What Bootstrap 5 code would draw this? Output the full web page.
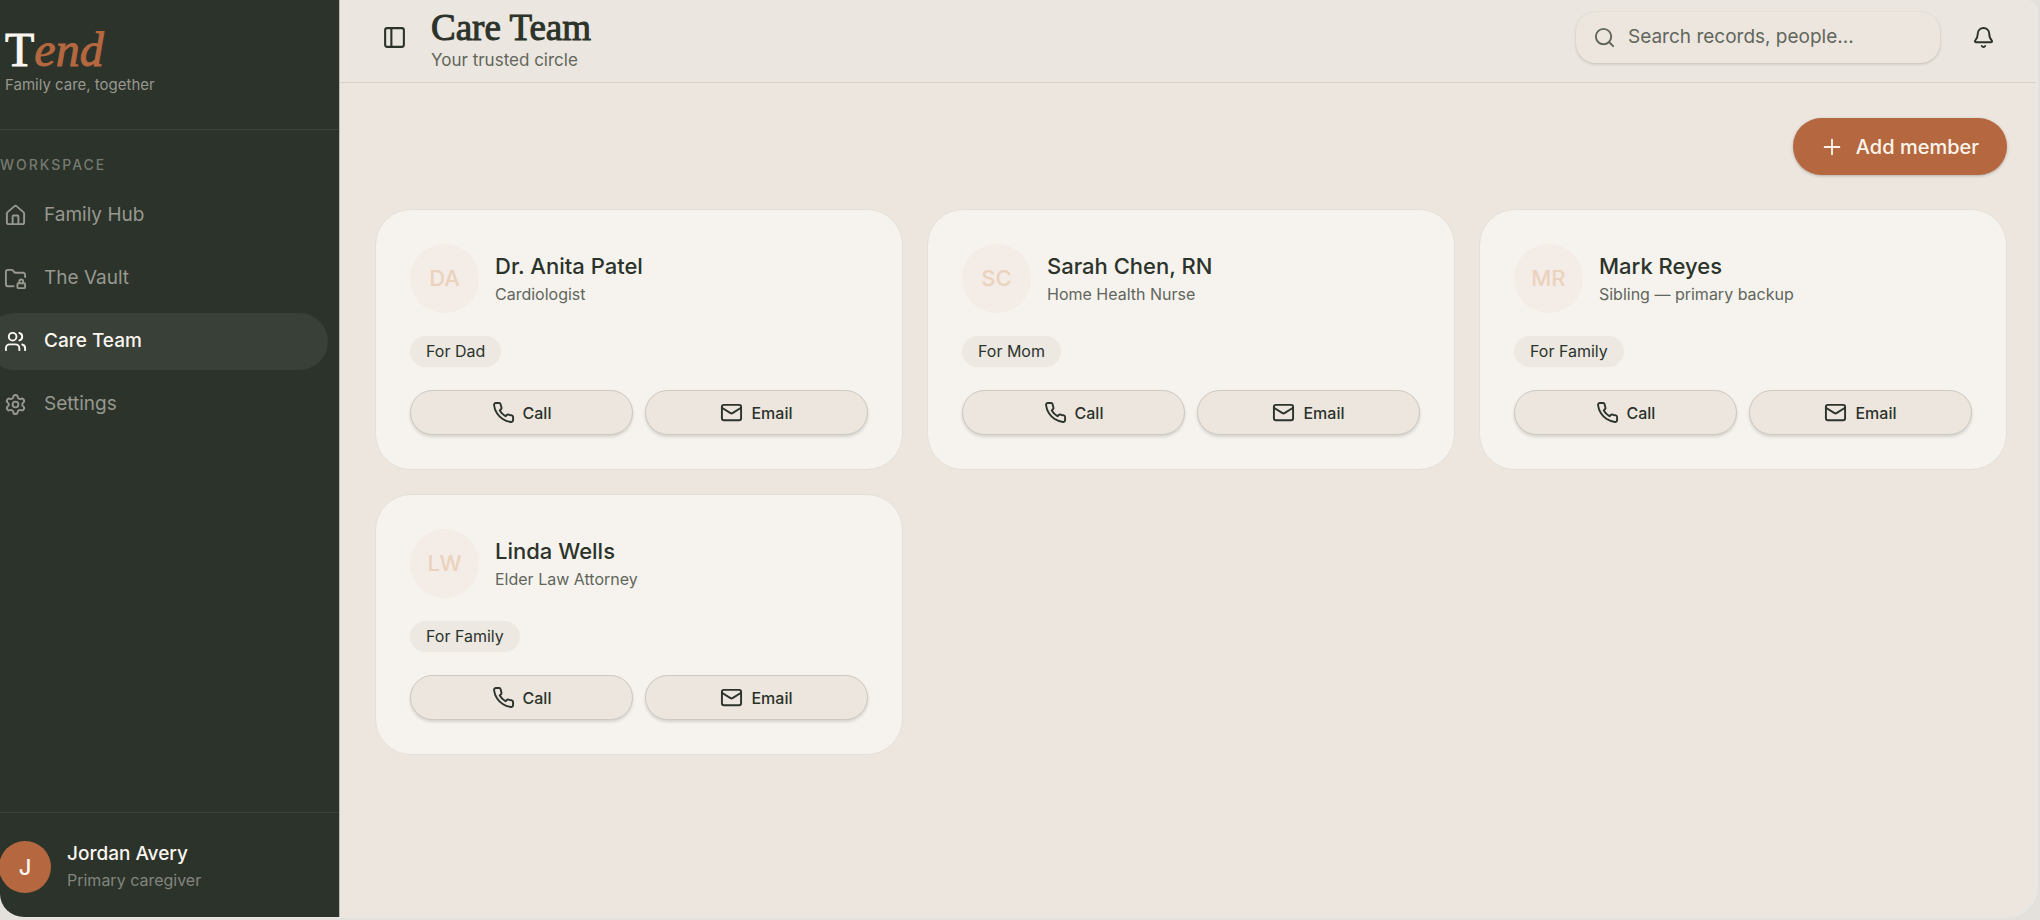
<!DOCTYPE html>
<html lang="en">
<head>
<meta charset="utf-8">
<meta name="viewport" content="width=device-width, initial-scale=1">
<title>Tend – Care Team</title>
<link href="https://cdn.jsdelivr.net/npm/bootstrap@5.3.0/dist/css/bootstrap.min.css" rel="stylesheet">
<style>
  :root { --ink: #2b332b; --muted: #61665c; --clay: #b5683f; --sand: #ede6df; --line: #d5d0ca; }
  body { font-family: Inter, "Open Sans", sans-serif; color: var(--ink); background: #e4e1dc; }
  svg { fill: none; stroke: currentColor; stroke-width: 2; stroke-linecap: round; stroke-linejoin: round; flex: none; }
  .shell { min-height: calc(100vh - 2px); margin-right: 2px; border-right: 2px solid #e9e8e8; border-bottom: 1px solid #e9e8e8;
    border-radius: 0 12px 32px 24px; overflow: hidden; background: var(--sand); }
  .side { width: 340px; flex: none; background: #2b332b; color: #97988f; border-right: 1px solid #b9b8b1; }
  .brand-block { height: 130px; padding: 23px 5px 0; border-bottom: 1px solid #3c433b; }
  .logo { font: 48px/54px "Liberation Serif", serif; color: #fbf6ef; -webkit-text-stroke: 1px; }
  .logo em { color: var(--clay); }
  .tagline { font-size: 15px; line-height: 16px; }
  .section-label { font-size: 14px; line-height: 20px; font-weight: 500; letter-spacing: 2px; color: #767a71; padding: 25px 0 12px; }
  .side .nav { gap: 6px; margin: 0 11px 0 -14px; }
  .side .nav-link { height: 57px; padding: 0 18px; border-radius: 29px; font-size: 19px; gap: 17px; color: #97988f; }
  .side .nav-link.active { background: #384037; color: #fbf6ef; font-weight: 500; }
  .profile { height: 105px; padding-top: 4px; border-top: 1px solid #3c433b; gap: 16px; margin-left: -1px; }
  .profile-pic { width: 52px; height: 52px; background: var(--clay); color: #fbf6ef; font-size: 22px; font-weight: 500; }
  .profile-name { font-size: 19px; line-height: 26px; font-weight: 500; color: #fbf6ef; }
  .profile-role { font-size: 16px; line-height: 26px; color: #83857d; }
  .topbar { height: 83px; padding: 0 41px 8px 42px; background: #ebe6df; border-bottom: 1px solid var(--line); }
  .title-block { padding-top: 6px; }
  .page-title { font: 37px/40px "Liberation Serif", serif; -webkit-text-stroke: 1px; }
  .page-sub { font-size: 17px; line-height: 24px; color: var(--muted); }
  .icon-btn { border: 0; padding: 0; background: none; color: var(--ink); display: flex; }
  .search-box { width: 364px; height: 51px; border-radius: 20px; padding: 0 17px; gap: 12px; background: var(--sand); color: var(--muted);
    box-shadow: 0 1px 3px rgba(43,51,43,.22); margin-right: 32px; }
  .search-box input { border: 0; background: none; outline: 0; padding: 0; min-width: 0; font-size: 19px; color: var(--ink); }
  .search-box input::placeholder { color: var(--muted); opacity: 1; }
  .content { padding: 35px 29px 35px 35px; }
  .add-btn { height: 57px; padding: 0 28px; border: 0; border-radius: 29px; background: var(--clay); color: #fdf5ec; font-size: 20px;
    font-weight: 500; gap: 13px; box-shadow: 0 1px 3px rgba(43,51,43,.3); margin-bottom: 34px; }
  .team { --bs-gutter-x: 24px; --bs-gutter-y: 24px; }
  .person { background: #f6f3ee; border: 1px solid #e4e0d9; border-radius: 36px; padding: 34px; color: var(--ink); }
  .initials { width: 69px; height: 69px; background: #f4ece6; color: #ebd2bd; font-size: 22px; font-weight: 500; }
  .person-name { font-size: 22px; line-height: 30px; font-weight: 500; margin: 0; }
  .person-role { font-size: 16px; line-height: 26px; color: var(--muted); }
  .chip { font-size: 16px; line-height: 31px; padding: 0 16px; background: #ede8e2; margin: 23px 0; }
  .contact { height: 45px; border: 1px solid #cec8c1; border-radius: 23px; background: var(--sand); color: var(--ink); font-size: 16px;
    font-weight: 500; padding: 0; gap: 8px; box-shadow: 0 2px 3px rgba(43,51,43,.16); }
</style>
</head>
<body>
<svg class="d-none" aria-hidden="true">
  <symbol id="phone" viewBox="0 0 24 24"><path d="M22 16.92v3a2 2 0 0 1-2.18 2 19.79 19.79 0 0 1-8.63-3.07 19.5 19.5 0 0 1-6-6 19.79 19.79 0 0 1-3.07-8.67A2 2 0 0 1 4.11 2h3a2 2 0 0 1 2 1.72 12.84 12.84 0 0 0 .7 2.81 2 2 0 0 1-.45 2.11L8.09 9.91a16 16 0 0 0 6 6l1.27-1.27a2 2 0 0 1 2.11-.45 12.84 12.84 0 0 0 2.81.7A2 2 0 0 1 22 16.92z"/></symbol>
  <symbol id="mail" viewBox="0 0 24 24"><rect x="2" y="4" width="20" height="16" rx="2"/><path d="m22 7-8.97 5.7a1.94 1.94 0 0 1-2.06 0L2 7"/></symbol>
</svg>
<div class="shell d-flex">
  <aside class="side d-flex flex-column">
    <div class="brand-block">
      <div class="logo">T<em>end</em></div>
      <div class="tagline">Family care, together</div>
    </div>
    <div class="section-label">WORKSPACE</div>
    <nav class="nav flex-column" aria-label="Workspace">
      <a class="nav-link d-flex align-items-center" href="#"><svg width="23" height="23" viewBox="0 0 24 24"><path d="M15 21v-8a1 1 0 0 0-1-1h-4a1 1 0 0 0-1 1v8"/><path d="M3 10a2 2 0 0 1 .709-1.528l7-5.999a2 2 0 0 1 2.582 0l7 5.999A2 2 0 0 1 21 10v9a2 2 0 0 1-2 2H5a2 2 0 0 1-2-2z"/></svg>Family Hub</a>
      <a class="nav-link d-flex align-items-center" href="#"><svg width="23" height="23" viewBox="0 0 24 24"><rect width="8" height="5" x="14" y="17" rx="1"/><path d="M10 20H4a2 2 0 0 1-2-2V5a2 2 0 0 1 2-2h3.9a2 2 0 0 1 1.69.9l.81 1.2a2 2 0 0 0 1.67.9H20a2 2 0 0 1 2 2v2.5"/><path d="M20 17v-2a2 2 0 1 0-4 0v2"/></svg>The Vault</a>
      <a class="nav-link active d-flex align-items-center" href="#" aria-current="page"><svg width="23" height="23" viewBox="0 0 24 24"><path d="M16 21v-2a4 4 0 0 0-4-4H6a4 4 0 0 0-4 4v2"/><circle cx="9" cy="7" r="4"/><path d="M22 21v-2a4 4 0 0 0-3-3.87"/><path d="M16 3.13a4 4 0 0 1 0 7.75"/></svg>Care Team</a>
      <a class="nav-link d-flex align-items-center" href="#"><svg width="23" height="23" viewBox="0 0 24 24"><path d="M9.671 4.136a2.34 2.34 0 0 1 4.659 0 2.34 2.34 0 0 0 3.319 1.915 2.34 2.34 0 0 1 2.33 4.033 2.34 2.34 0 0 0 0 3.831 2.34 2.34 0 0 1-2.33 4.033 2.34 2.34 0 0 0-3.319 1.915 2.34 2.34 0 0 1-4.659 0 2.34 2.34 0 0 0-3.32-1.915 2.34 2.34 0 0 1-2.33-4.033 2.34 2.34 0 0 0 0-3.831A2.34 2.34 0 0 1 6.35 6.051a2.34 2.34 0 0 0 3.319-1.915"/><circle cx="12" cy="12" r="3"/></svg>Settings</a>
    </nav>
    <div class="profile mt-auto d-flex align-items-center">
      <div class="profile-pic rounded-circle d-flex align-items-center justify-content-center">J</div>
      <div>
        <div class="profile-name">Jordan Avery</div>
        <div class="profile-role">Primary caregiver</div>
      </div>
    </div>
  </aside>

  <main class="flex-grow-1">
    <header class="topbar d-flex align-items-center">
      <button class="icon-btn" type="button" aria-label="Toggle sidebar"><svg width="25" height="25" viewBox="0 0 24 24"><rect x="3" y="3" width="18" height="18" rx="2"/><path d="M9 3v18"/></svg></button>
      <div class="title-block ms-4 me-auto">
        <h1 class="page-title m-0">Care Team</h1>
        <div class="page-sub">Your trusted circle</div>
      </div>
      <label class="search-box d-flex align-items-center">
        <svg width="23" height="23" viewBox="0 0 24 24"><circle cx="11" cy="11" r="8"/><path d="m21 21-4.3-4.3"/></svg>
        <input class="flex-grow-1" type="search" placeholder="Search records, people..." aria-label="Search records, people">
      </label>
      <button class="icon-btn" type="button" aria-label="Notifications"><svg width="23" height="23" viewBox="0 0 24 24"><path d="M10.268 21a2 2 0 0 0 3.464 0"/><path d="M3.262 15.326A1 1 0 0 0 4 17h16a1 1 0 0 0 .74-1.673C19.41 13.956 18 12.499 18 8A6 6 0 0 0 6 8c0 4.499-1.411 5.956-2.738 7.326"/></svg></button>
    </header>

    <section class="content">
      <div class="d-flex justify-content-end">
        <button class="add-btn d-flex align-items-center" type="button"><svg width="22" height="22" viewBox="0 0 24 24"><path d="M4 12h16M12 4v16"/></svg>Add member</button>
      </div>
      <div class="row row-cols-1 row-cols-lg-2 row-cols-xl-3 team">
        <div class="col"><article class="card person">
          <div class="d-flex align-items-center gap-3">
            <div class="initials rounded-circle d-flex align-items-center justify-content-center">DA</div>
            <div><h2 class="person-name">Dr. Anita Patel</h2><div class="person-role">Cardiologist</div></div>
          </div>
          <span class="chip rounded-pill align-self-start">For Dad</span>
          <div class="d-flex contacts">
            <button class="contact flex-fill w-50 me-2 d-flex align-items-center justify-content-center" type="button"><svg width="23" height="23"><use href="#phone"/></svg>Call</button>
            <button class="contact flex-fill w-50 ms-1 d-flex align-items-center justify-content-center" type="button"><svg width="23" height="23"><use href="#mail"/></svg>Email</button>
          </div>
        </article></div>
        <div class="col"><article class="card person">
          <div class="d-flex align-items-center gap-3">
            <div class="initials rounded-circle d-flex align-items-center justify-content-center">SC</div>
            <div><h2 class="person-name">Sarah Chen, RN</h2><div class="person-role">Home Health Nurse</div></div>
          </div>
          <span class="chip rounded-pill align-self-start">For Mom</span>
          <div class="d-flex contacts">
            <button class="contact flex-fill w-50 me-2 d-flex align-items-center justify-content-center" type="button"><svg width="23" height="23"><use href="#phone"/></svg>Call</button>
            <button class="contact flex-fill w-50 ms-1 d-flex align-items-center justify-content-center" type="button"><svg width="23" height="23"><use href="#mail"/></svg>Email</button>
          </div>
        </article></div>
        <div class="col"><article class="card person">
          <div class="d-flex align-items-center gap-3">
            <div class="initials rounded-circle d-flex align-items-center justify-content-center">MR</div>
            <div><h2 class="person-name">Mark Reyes</h2><div class="person-role">Sibling — primary backup</div></div>
          </div>
          <span class="chip rounded-pill align-self-start">For Family</span>
          <div class="d-flex contacts">
            <button class="contact flex-fill w-50 me-2 d-flex align-items-center justify-content-center" type="button"><svg width="23" height="23"><use href="#phone"/></svg>Call</button>
            <button class="contact flex-fill w-50 ms-1 d-flex align-items-center justify-content-center" type="button"><svg width="23" height="23"><use href="#mail"/></svg>Email</button>
          </div>
        </article></div>
        <div class="col"><article class="card person">
          <div class="d-flex align-items-center gap-3">
            <div class="initials rounded-circle d-flex align-items-center justify-content-center">LW</div>
            <div><h2 class="person-name">Linda Wells</h2><div class="person-role">Elder Law Attorney</div></div>
          </div>
          <span class="chip rounded-pill align-self-start">For Family</span>
          <div class="d-flex contacts">
            <button class="contact flex-fill w-50 me-2 d-flex align-items-center justify-content-center" type="button"><svg width="23" height="23"><use href="#phone"/></svg>Call</button>
            <button class="contact flex-fill w-50 ms-1 d-flex align-items-center justify-content-center" type="button"><svg width="23" height="23"><use href="#mail"/></svg>Email</button>
          </div>
        </article></div>
      </div>
    </section>
  </main>
</div>
<script src="https://cdn.jsdelivr.net/npm/bootstrap@5.3.0/dist/js/bootstrap.bundle.min.js"></script>
</body>
</html>
